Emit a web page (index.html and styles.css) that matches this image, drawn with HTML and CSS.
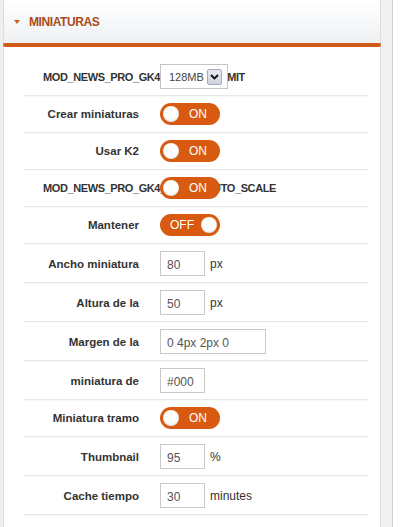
FILE: index.html
```html
<!DOCTYPE html>
<html lang="es">
<head>
<meta charset="utf-8">
<title>Miniaturas</title>
<link rel="stylesheet" href="styles.css">
</head>
<body>
<div class="page">
  <div class="gutter"></div>
  <div class="panel">
    <div class="header">
      <span class="caret"></span>
      <span class="title">MINIATURAS</span>
    </div>
    <div class="bar"></div>
    <div class="fields">
      <div class="row">
        <div class="label caps">MOD_NEWS_PRO_GK4_MEMORY_LIMIT</div>
        <div class="ctrl">
          <div class="select"><span class="sel-text">128MB</span><span class="sel-btn"><svg width="9" height="6" viewBox="0 0 9 6"><path d="M1 1 L4.5 4.5 L8 1" fill="none" stroke="#111" stroke-width="1.8"/></svg></span></div>
        </div>
      </div>
      <div class="row">
        <div class="label">Crear miniaturas</div>
        <div class="ctrl"><div class="toggle on"><span class="knob"></span><span class="tlabel">ON</span></div></div>
      </div>
      <div class="row">
        <div class="label">Usar K2</div>
        <div class="ctrl"><div class="toggle on"><span class="knob"></span><span class="tlabel">ON</span></div></div>
      </div>
      <div class="row">
        <div class="label caps">MOD_NEWS_PRO_GK4_IMAGE_AUTO_SCALE</div>
        <div class="ctrl"><div class="toggle on"><span class="knob"></span><span class="tlabel">ON</span></div></div>
      </div>
      <div class="row">
        <div class="label">Mantener</div>
        <div class="ctrl"><div class="toggle off"><span class="tlabel">OFF</span><span class="knob"></span></div></div>
      </div>
      <div class="row tall">
        <div class="label">Ancho miniatura</div>
        <div class="ctrl"><input class="field small" type="text" value="80"><span class="unit">px</span></div>
      </div>
      <div class="row tall">
        <div class="label">Altura de la</div>
        <div class="ctrl"><input class="field small" type="text" value="50"><span class="unit">px</span></div>
      </div>
      <div class="row tall">
        <div class="label">Margen de la</div>
        <div class="ctrl"><input class="field wide" type="text" value="0 4px 2px 0"></div>
      </div>
      <div class="row tall">
        <div class="label">miniatura de</div>
        <div class="ctrl"><input class="field small" type="text" value="#000"></div>
      </div>
      <div class="row">
        <div class="label">Miniatura tramo</div>
        <div class="ctrl"><div class="toggle on"><span class="knob"></span><span class="tlabel">ON</span></div></div>
      </div>
      <div class="row tall">
        <div class="label">Thumbnail</div>
        <div class="ctrl"><input class="field small" type="text" value="95"><span class="unit">%</span></div>
      </div>
      <div class="row tall">
        <div class="label">Cache tiempo</div>
        <div class="ctrl"><input class="field small" type="text" value="30"><span class="unit">minutes</span></div>
      </div>
    </div>
  </div>
  <div class="rail"></div>
</div>
</body>
</html>
```

FILE: styles.css
```css
* { box-sizing: border-box; }

html, body {
  margin: 0;
  padding: 0;
  background: #ffffff;
  font-family: "Liberation Sans", Arial, sans-serif;
}

.page {
  display: flex;
  align-items: stretch;
  min-height: 527px;
}

.gutter {
  width: 3px;
  flex-shrink: 0;
  background: #efefef;
}

.panel {
  width: 378px;
  flex-shrink: 0;
  border-left: 1px solid #dedede;
  border-right: 1px solid #dedede;
  background: #ffffff;
}

.header {
  height: 43px;
  display: flex;
  align-items: center;
  padding-left: 10px;
  background: linear-gradient(#ffffff, #eef0f2);
}

.caret {
  width: 0;
  height: 0;
  border-left: 3px solid transparent;
  border-right: 3px solid transparent;
  border-top: 4px solid #d5601c;
  margin-right: 9px;
  margin-top: 1px;
}

.title {
  font-size: 12px;
  font-weight: bold;
  color: #a64c1a;
  letter-spacing: -0.4px;
}

.bar {
  height: 4px;
  margin: 0 -1px;
  background: #cf5a15;
  border-radius: 2px;
}

.fields {
  padding-top: 10px;
}

.row {
  display: flex;
  align-items: center;
  margin: 0 12px 0 20px;
  padding: 7px 0 7px;
  border-bottom: 1px solid #e7e7e7;
  box-shadow: 0 1px 0 #f9f9f9;
}

.row.tall {
  padding: 7px 0 6px;
}

.row:first-child {
  padding: 7px 0 6px;
}

.label {
  width: 96px;
  margin-left: 19px;
  margin-right: 21px;
  flex-shrink: 0;
  text-align: right;
  white-space: nowrap;
  font-size: 11.5px;
  font-weight: bold;
  color: #333333;
}

.label.caps {
  font-size: 11px;
  letter-spacing: -0.4px;
}

.ctrl {
  position: relative;
  z-index: 1;
  display: flex;
  align-items: center;
}

.select {
  width: 68px;
  height: 25px;
  border: 1px solid #c4c4c4;
  background: #ffffff;
  display: flex;
  align-items: center;
  justify-content: space-between;
  padding: 0 5px 0 8px;
}

.sel-text {
  font-size: 11px;
  color: #444444;
}

.sel-btn {
  width: 15px;
  height: 16px;
  border: 1px solid #a7acbd;
  border-radius: 2px;
  background: linear-gradient(#e9ebf2, #cfd3e0);
  display: flex;
  align-items: center;
  justify-content: center;
}

.toggle {
  width: 60px;
  height: 22px;
  border-radius: 11px;
  background: #d75a10;
  display: flex;
  align-items: center;
  padding: 0 3px;
}

.knob {
  width: 16px;
  height: 16px;
  border-radius: 50%;
  background: #ffffff;
  box-shadow: inset 0 -1px 2px rgba(0,0,0,0.15);
  flex-shrink: 0;
}

.tlabel {
  flex: 1;
  text-align: center;
  font-size: 12px;
  color: #ffffff;
}

.field {
  height: 25px;
  border: 1px solid #c9c9c9;
  background: #ffffff;
  padding: 3px 6px 0;
  font-family: "Liberation Sans", Arial, sans-serif;
  font-size: 12px;
  color: #555555;
  outline: none;
  margin: 0;
}

.field.small {
  width: 45px;
}

.field.wide {
  width: 106px;
}

.unit {
  margin-left: 5px;
  font-size: 12px;
  color: #333333;
}

.rail {
  width: 12px;
  flex-shrink: 0;
  background: #f1f1f1;
  border-right: 1px solid #d2d2d2;
}
```
